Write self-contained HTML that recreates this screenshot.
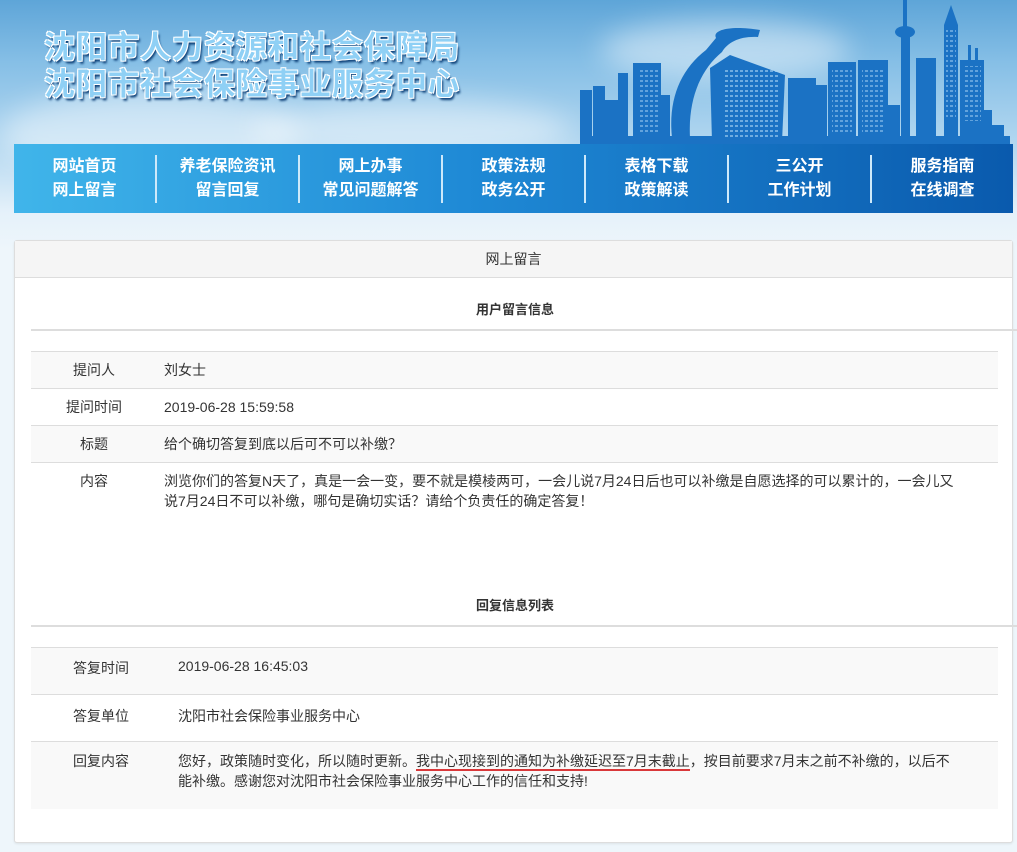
<!DOCTYPE html>
<html><head><meta charset="utf-8">
<style>
*{margin:0;padding:0;box-sizing:border-box}
body{width:1017px;height:852px;overflow:hidden;font-family:"Liberation Sans","Noto Sans CJK SC",sans-serif;color:#333;font-size:13px;
background:linear-gradient(180deg,#5ea5d8 0%,#86bfe6 25%,#b6d9f1 60%,#e5f1fa 85%,#eef6fb 100%) 0 0/1017px 250px no-repeat,#eef6fb;position:relative}
.cloud{position:absolute;border-radius:50%;background:rgba(255,255,255,.45);filter:blur(14px)}
.title{position:absolute;left:44px;font-size:31px;font-weight:bold;color:#8fd0f5;letter-spacing:1px;font-family:"Noto Sans CJK SC",sans-serif;
text-shadow:-1px -1px 0 #fff,1px -1px 0 #fff,-1px 1px 0 #fff,1px 1px 0 #fff,2px 3px 2px #0a3d75}
.nav{position:absolute;left:14px;top:144px;width:999px;height:69px;background:linear-gradient(90deg,#40b5ea 0%,#1f8ad6 45%,#0a5aad 100%);display:flex;align-items:center}
.nav div{flex:1;text-align:center;color:#fff;font-weight:bold;font-size:16px;line-height:24px;border-left:2px solid #cde9fa;height:48px;padding-top:0}
.nav div:first-child{border-left:none}
.panel{position:absolute;left:14px;top:240px;width:999px;height:603px;background:#fff;border:1px solid #ddd;border-radius:3px;box-shadow:0 1px 2px rgba(0,0,0,.08)}
.ph{height:37px;background:#f5f5f5;border-bottom:1px solid #ddd;text-align:center;line-height:37px;font-size:14px;color:#333}
.sec{position:absolute;left:16px;width:988px;text-align:center;font-weight:bold;font-size:13px;color:#333;border-bottom:2px solid #ddd;padding-right:20px}
table{position:absolute;left:16px;width:967px;border-collapse:collapse;font-size:14px}
td{border-top:1px solid #ddd;vertical-align:top;color:#333}
tr.g td{background:#f9f9f9}
</style></head><body>
<div class="cloud" style="left:0;top:90px;width:300px;height:90px"></div>
<div class="cloud" style="left:250px;top:100px;width:320px;height:60px"></div>
<div class="cloud" style="left:600px;top:20px;width:250px;height:60px"></div>
<div class="title" style="top:22px">沈阳市人力资源和社会保障局</div>
<div class="title" style="top:59px">沈阳市社会保险事业服务中心</div>
<svg style="position:absolute;left:0;top:0" width="1017" height="150">
<defs><pattern id="w" width="5" height="5" patternUnits="userSpaceOnUse"><rect width="3" height="2" fill="#a8d4f5"/></pattern></defs>
<g fill="#1b72c4">
<rect x="580" y="90" width="12" height="55"/><rect x="593" y="86" width="12" height="59"/><rect x="605" y="100" width="14" height="45"/>
<rect x="618" y="73" width="10" height="72"/><rect x="633" y="63" width="28" height="82"/><rect x="660" y="95" width="10" height="50"/>
<path d="M672 138 C668 100 680 70 706 50 L716 38 C712 30 730 25 760 30 L758 37 C740 36 728 42 722 52 C700 70 688 100 690 138Z"/>
<path d="M710 68 L730 55 L785 75 L782 142 L712 142Z"/>
<rect x="788" y="78" width="28" height="67"/><rect x="815" y="85" width="12" height="60"/>
<rect x="828" y="62" width="28" height="83"/><rect x="858" y="60" width="30" height="85"/><rect x="886" y="105" width="14" height="40"/>
<rect x="903" y="0" width="4" height="30"/><ellipse cx="905" cy="32" rx="10" ry="6"/><rect x="901" y="35" width="9" height="110"/>
<rect x="916" y="58" width="20" height="87"/>
<path d="M944 145 V25 L951 5 L958 25 V145Z"/><rect x="960" y="60" width="24" height="85"/><rect x="968" y="45" width="3" height="15"/><rect x="975" y="48" width="3" height="12"/>
<rect x="580" y="136" width="430" height="10"/><rect x="984" y="110" width="8" height="30"/><rect x="992" y="125" width="12" height="15"/>
</g>
<rect x="725" y="70" width="55" height="68" fill="url(#w)" opacity=".6"/>
<rect x="638" y="70" width="20" height="65" fill="url(#w)" opacity=".5"/>
<rect x="832" y="70" width="20" height="65" fill="url(#w)" opacity=".5"/>
<rect x="862" y="68" width="22" height="65" fill="url(#w)" opacity=".5"/>
<rect x="963" y="66" width="18" height="55" fill="url(#w)" opacity=".5"/>
<rect x="946" y="30" width="10" height="90" fill="url(#w)" opacity=".5"/>
</svg>
<div class="nav">
<div>网站首页<br>网上留言</div><div>养老保险资讯<br>留言回复</div><div>网上办事<br>常见问题解答</div><div>政策法规<br>政务公开</div><div>表格下载<br>政策解读</div><div>三公开<br>工作计划</div><div>服务指南<br>在线调查</div>
</div>
<div class="panel">
<div class="ph">网上留言</div>
<div class="sec" style="top:62px;height:28px;line-height:14px">用户留言信息</div>
<table style="top:110px">
<tr class="g"><td style="width:126px;height:37px;text-align:center;line-height:36px">提问人</td><td style="line-height:36px;padding-left:7px">刘女士</td></tr>
<tr><td style="height:37px;text-align:center;line-height:36px">提问时间</td><td style="line-height:36px;padding-left:7px">2019-06-28 15:59:58</td></tr>
<tr class="g"><td style="height:37px;text-align:center;line-height:36px">标题</td><td style="line-height:36px;padding-left:7px">给个确切答复到底以后可不可以补缴？</td></tr>
<tr><td style="height:90px;text-align:center;padding-top:8px;line-height:20px">内容</td><td style="padding:8px 44px 0 7px;line-height:20px">浏览你们的答复N天了，真是一会一变，要不就是模棱两可，一会儿说7月24日后也可以补缴是自愿选择的可以累计的，一会儿又说7月24日不可以补缴，哪句是确切实话？请给个负责任的确定答复！</td></tr>
</table>
<div class="sec" style="top:358px;height:28px;line-height:14px">回复信息列表</div>
<table style="top:406px">
<tr class="g"><td style="width:140px;height:47px;text-align:center;padding-top:10px">答复时间</td><td style="padding:10px 0 0 7px">2019-06-28 16:45:03</td></tr>
<tr><td style="height:47px;text-align:center;padding-top:11px">答复单位</td><td style="padding:11px 0 0 7px">沈阳市社会保险事业服务中心</td></tr>
<tr class="g"><td style="height:67px;text-align:center;padding-top:9px;line-height:20px">回复内容</td><td style="padding:9px 40px 0 7px;line-height:20px">您好，政策随时变化，所以随时更新。<span style="border-bottom:2px solid #d9383a">我中心现接到的通知为补缴延迟至7月末截止</span>，按目前要求7月末之前不补缴的，以后不能补缴。感谢您对沈阳市社会保险事业服务中心工作的信任和支持!</td></tr>
</table>
</div>
</body></html>
